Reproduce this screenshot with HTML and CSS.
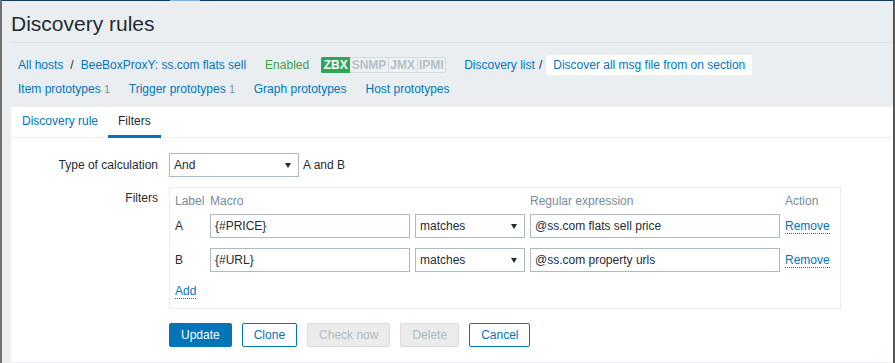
FILE: index.html
```html
<!DOCTYPE html>
<html lang="en">
<head>
    <meta charset="UTF-8">
    <title>Discovery rules</title>
    <link rel="stylesheet" href="styles.css">
</head>
<body>

<div class="topline"></div>

<div class="page">

    <!-- title -->
    <div class="title">
        <h1>Discovery rules</h1>
    </div>

    <!-- host navigation -->
    <div class="nav">
        <div class="nav-row">
            <a class="crumb" href="#">All hosts</a><span class="sep">/</span><a class="crumb" href="#">BeeBoxProxY: ss.com flats sell</a>
            <span class="status">Enabled</span>
            <span class="badges">
                <span class="badge on">ZBX</span><span class="badge">SNMP</span><span class="badge">JMX</span><span class="badge">IPMI</span>
            </span>
            <a class="crumb list" href="#">Discovery list</a><span class="sep">/</span><span class="crumb current">Discover all msg file from on section</span>
        </div>
        <div class="nav-row">
            <span class="proto"><a href="#">Item prototypes</a><sup class="count">1</sup></span>
            <span class="proto"><a href="#">Trigger prototypes</a><sup class="count">1</sup></span>
            <span class="proto"><a href="#">Graph prototypes</a></span>
            <span class="proto"><a href="#">Host prototypes</a></span>
        </div>
    </div>

    <!-- form panel -->
    <div class="panel">
        <ul class="tabs">
            <li><a href="#">Discovery rule</a></li>
            <li class="active">Filters</li>
        </ul>

        <div class="form">
            <div class="form-row middle">
                <label>Type of calculation</label>
                <div class="field">
                    <span class="select calc">And</span>
                    <span class="formula">A and B</span>
                </div>
            </div>

            <div class="form-row filters">
                <label>Filters</label>
                <div class="filter-box">
                    <div class="filter-grid head">
                        <span>Label</span>
                        <span>Macro</span>
                        <span></span>
                        <span>Regular expression</span>
                        <span>Action</span>
                    </div>
                    <div class="filter-grid row">
                        <span>A</span>
                        <input type="text" value="{#PRICE}">
                        <span class="select">matches</span>
                        <input type="text" value="@ss.com flats sell price">
                        <span><a class="dotted" href="#">Remove</a></span>
                    </div>
                    <div class="filter-grid row second">
                        <span>B</span>
                        <input type="text" value="{#URL}">
                        <span class="select">matches</span>
                        <input type="text" value="@ss.com property urls">
                        <span><a class="dotted" href="#">Remove</a></span>
                    </div>
                    <div class="add-row">
                        <a class="dotted" href="#">Add</a>
                    </div>
                </div>
            </div>

            <div class="form-row buttons-row">
                <span></span>
                <div class="buttons">
                    <button class="btn primary">Update</button>
                    <button class="btn alt">Clone</button>
                    <button class="btn" disabled>Check now</button>
                    <button class="btn" disabled>Delete</button>
                    <button class="btn alt">Cancel</button>
                </div>
            </div>
        </div>
    </div>

</div>

</body>
</html>
```

FILE: styles.css
```css
html {
    height: 100%;
}

body {
    margin: 0;
    min-height: 100%;
    box-sizing: border-box;
    background-color: #ebeef0;
    border-left: 2px solid #6f6f6f;
    border-right: 2px solid #555555;
    font-family: "Liberation Sans", Arial, sans-serif;
    font-size: 12px;
    color: #1f2c33;
}

a {
    color: #0275b8;
    text-decoration: none;
}

.topline {
    height: 1px;
    background: linear-gradient(to right, #113a5c 168px, #7db4e0 168px, #7db4e0 198px, #113a5c 198px);
}

.page {
    padding-left: 9px;
}

/* title */
.title {
    padding: 11px 0 6px;
    border-bottom: 1px solid #dfe4e7;
}

.title h1 {
    margin: 0;
    font-size: 21px;
    font-weight: normal;
    line-height: 24px;
    color: #1f2c33;
}

/* navigation */
.nav {
    padding: 12px 0 8px;
}

.nav-row {
    display: flex;
    align-items: center;
    height: 20px;
    line-height: 20px;
    white-space: nowrap;
}

.nav-row + .nav-row {
    margin-top: 4px;
}

.crumb {
    padding: 0 7px;
}

.crumb.list {
    margin-left: 11px;
    padding-right: 4px;
}

.crumb.current {
    margin-left: 4px;
    background-color: #ffffff;
    color: #0275b8;
}

.sep {
    color: #1f2c33;
}

.status {
    margin-left: 12px;
    color: #429e47;
}

.badges {
    display: flex;
    margin-left: 12px;
    border-radius: 2px;
    overflow: hidden;
}

.badge {
    padding: 0 1.5px;
    line-height: 14px;
    font-weight: bold;
    color: #b4c1c8;
    background-color: #eef1f3;
    border: 1px solid #d3dade;
}

.badge + .badge {
    border-left: none;
}

.badge.on {
    background-color: #2fa55b;
    border-color: #2fa55b;
    color: #ffffff;
}

.proto {
    padding: 0 7px;
    margin-right: 5px;
}

.count {
    margin-left: 3.5px;
    font-size: 10px;
    vertical-align: baseline;
    color: #768d99;
}

/* panel */
.panel {
    background-color: #ffffff;
    padding-bottom: 15px;
}

.tabs {
    display: flex;
    margin: 0;
    padding: 0 0 0 1px;
    list-style: none;
    border-bottom: 1px solid #ebeef0;
}

.tabs li {
    padding: 1px 10px 0;
    line-height: 27px;
    border-bottom: 3px solid transparent;
    margin-bottom: -1px;
}

.tabs li.active {
    border-bottom-color: #0275b8;
    color: #1f2c33;
}

.form {
    padding-top: 15px;
}

.form-row {
    display: grid;
    grid-template-columns: 147px 1fr;
    column-gap: 11px;
}

.form-row label {
    text-align: right;
    line-height: 14px;
}

.form-row.middle {
    align-items: center;
}

.form-row.filters {
    margin-top: 10px;
    align-items: start;
}

.form-row.filters label {
    padding-top: 4px;
}

.field {
    display: flex;
    align-items: center;
}

.select {
    display: flex;
    align-items: center;
    justify-content: space-between;
    box-sizing: border-box;
    height: 24px;
    padding: 0 7px 0 4px;
    border: 1px solid #acbbc2;
    background-color: #ffffff;
}

.select::after {
    content: "";
    border-left: 3px solid transparent;
    border-right: 3px solid transparent;
    border-top: 5px solid #1f2c33;
}

.select.calc {
    width: 130px;
}

.formula {
    margin-left: 4px;
}

/* filter table */
.filter-box {
    box-sizing: border-box;
    width: 672px;
    padding: 6px 5px 10px;
    border: 1px solid #ebeef0;
}

.filter-grid {
    display: grid;
    grid-template-columns: 30px 200px 110px 250px 1fr;
    column-gap: 5px;
    align-items: center;
}

.filter-grid.head {
    line-height: 14px;
    color: #768d99;
}

.filter-grid.row {
    margin-top: 6px;
}

.filter-grid.row.second {
    margin-top: 10px;
}

.filter-grid input {
    box-sizing: border-box;
    height: 24px;
    margin: 0;
    padding: 0 4px;
    border: 1px solid #acbbc2;
    font-family: "Liberation Sans", Arial, sans-serif;
    font-size: 12px;
    color: #1f2c33;
    outline: none;
}

.dotted {
    border-bottom: 1px dotted #0275b8;
}

.add-row {
    margin-top: 12px;
    line-height: 14px;
}

/* buttons */
.buttons-row {
    margin-top: 14px;
}

.buttons {
    display: flex;
    gap: 10px;
}

.btn {
    height: 24px;
    padding: 0 11px;
    font-family: "Liberation Sans", Arial, sans-serif;
    font-size: 12px;
    border: 1px solid #dcdcdc;
    border-radius: 2px;
    background-color: #ebebeb;
    color: #acbbc2;
}

.btn.primary {
    background-color: #0275b8;
    border-color: #0275b8;
    color: #ffffff;
}

.btn.alt {
    background-color: #ffffff;
    border-color: #0275b8;
    color: #0275b8;
}
```
